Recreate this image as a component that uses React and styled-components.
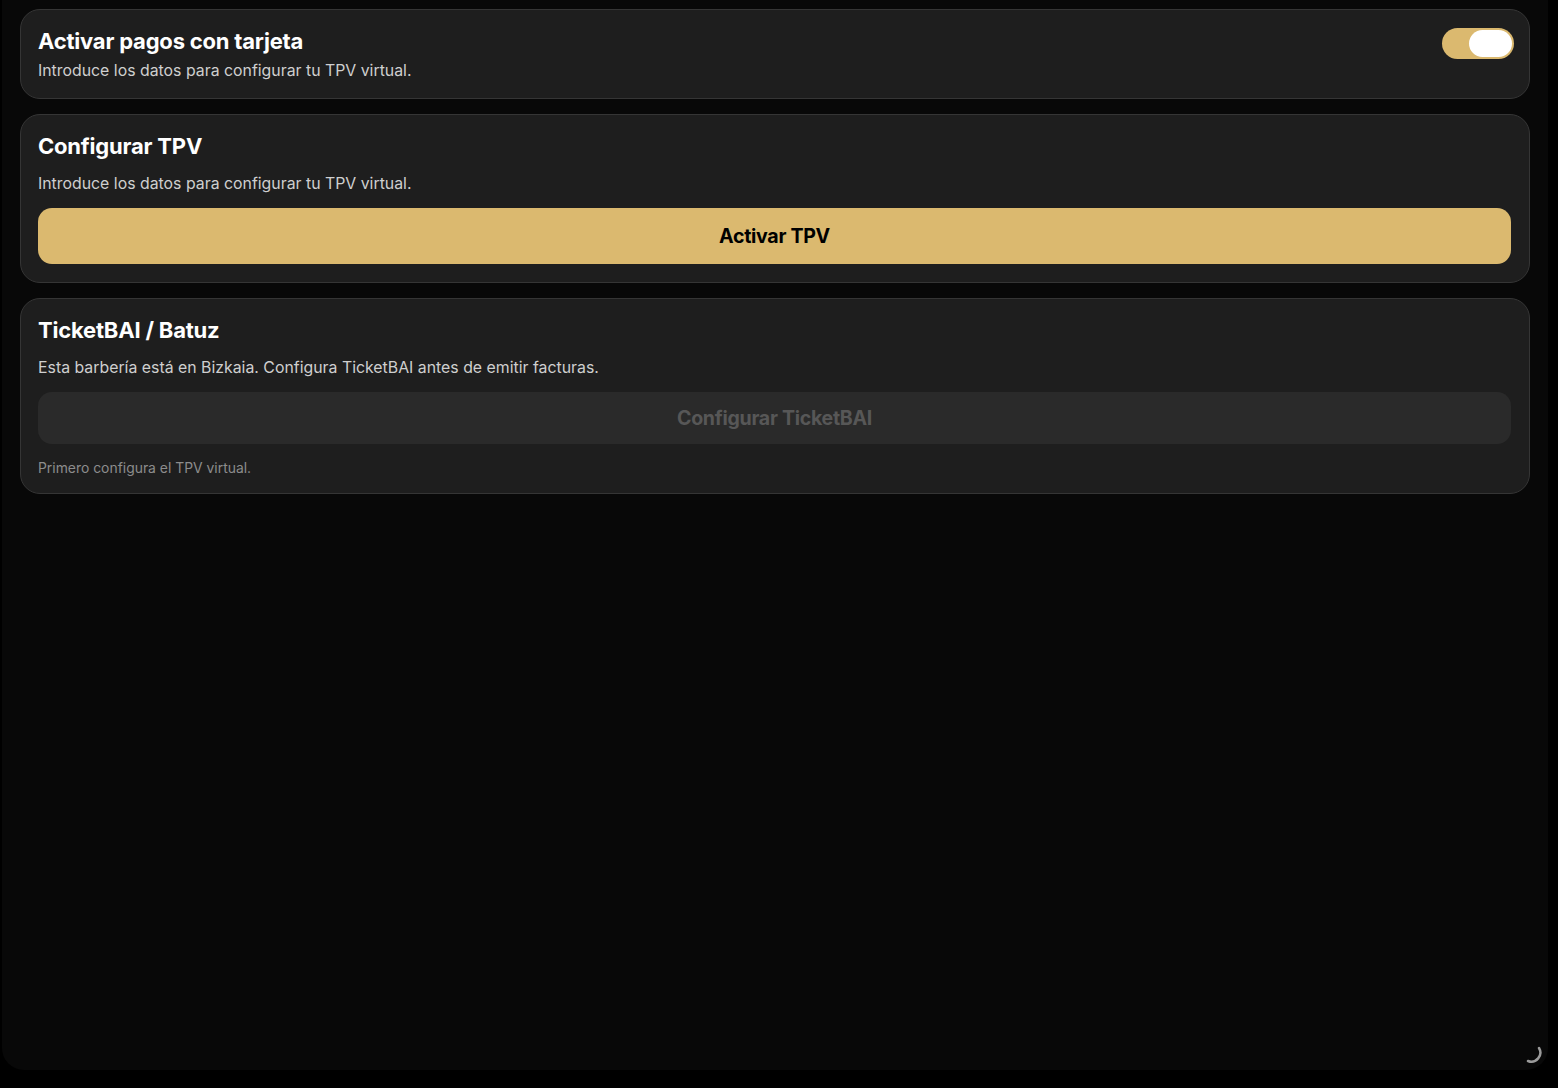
import React from "react";
import styled, { createGlobalStyle } from "styled-components";

const Global = createGlobalStyle`
  html, body { margin: 0; padding: 0; background: #000; }
  body { font-family: Inter, "Noto Sans", sans-serif; -webkit-font-smoothing: antialiased; }
  * { box-sizing: border-box; }
`;

const Frame = styled.div`
  width: 1558px;
  height: 1088px;
  background: #000;
  padding: 0 10px 18px 2px;
  display: flex;
`;

const Screen = styled.div`
  position: relative;
  flex: 1;
  background: #080808;
  border-radius: 0 0 22px 22px;
  padding: 9px 18px;
  display: flex;
  flex-direction: column;
  gap: 15px;
`;

const Card = styled.section`
  background: #1e1e1e;
  border: 1px solid #353535;
  border-radius: 20px;
  padding: 17px 18px ${(p) => p.$pb || 17}px 17px;
  display: flex;
  flex-direction: column;
`;

const HeaderRow = styled.div`
  display: flex;
  align-items: flex-start;
  justify-content: space-between;
`;

const TextCol = styled.div`
  display: flex;
  flex-direction: column;
  gap: ${(p) => p.$gap || 6}px;
`;

const Title = styled.h2`
  margin: 0;
  font-size: 22px;
  line-height: 28px;
  font-weight: 700;
  color: #fff;
  letter-spacing: -0.2px;
`;

const Sub = styled.p`
  margin: 0;
  font-size: 15.85px;
  line-height: 21px;
  color: #cfcfcf;
`;

const Note = styled.p`
  margin: 16px 0 0;
  font-size: 13.9px;
  line-height: 16px;
  color: #8c8c8c;
`;

const Toggle = styled.div`
  width: 72px;
  height: 31px;
  border-radius: 16px;
  background: #dbb96f;
  padding: 2px;
  margin: 1px -3px 0 0;
  display: flex;
  justify-content: flex-end;
`;

const Knob = styled.div`
  width: 43px;
  height: 27px;
  border-radius: 14px;
  background: #fff;
`;

const Button = styled.button`
  margin-top: ${(p) => p.$mt}px;
  width: 100%;
  height: ${(p) => p.$h}px;
  border: none;
  border-radius: 14px;
  background: ${(p) => (p.$disabled ? "#2a2a2a" : "#dbb96f")};
  color: ${(p) => (p.$disabled ? "#575757" : "#000")};
  font-family: inherit;
  font-size: 19.6px;
  font-weight: 700;
  letter-spacing: -0.3px;
`;

const Spinner = styled.svg`
  position: absolute;
  right: 5px;
  bottom: 5px;
`;

export default function App() {
  return (
    <>
      <Global />
      <Frame>
        <Screen>
          <Card $pb={17}>
            <HeaderRow>
              <TextCol $gap={5}>
                <Title>Activar pagos con tarjeta</Title>
                <Sub>Introduce los datos para configurar tu TPV virtual.</Sub>
              </TextCol>
              <Toggle>
                <Knob />
              </Toggle>
            </HeaderRow>
          </Card>

          <Card $pb={18}>
            <TextCol $gap={13}>
              <Title>Configurar TPV</Title>
              <Sub>Introduce los datos para configurar tu TPV virtual.</Sub>
            </TextCol>
            <Button $mt={14} $h={56}>Activar TPV</Button>
          </Card>

          <Card>
            <TextCol $gap={13}>
              <Title>TicketBAI / Batuz</Title>
              <Sub>Esta barbería está en Bizkaia. Configura TicketBAI antes de emitir facturas.</Sub>
            </TextCol>
            <Button $mt={14} $h={52} $disabled>Configurar TicketBAI</Button>
            <Note>Primero configura el TPV virtual.</Note>
          </Card>

          <Spinner width="20" height="20" viewBox="0 0 20 20">
            <path d="M16 3 A9 9 0 0 1 5 16" fill="none" stroke="#9a9a9a" strokeWidth="2.5" strokeLinecap="round" />
          </Spinner>
        </Screen>
      </Frame>
    </>
  );
}
